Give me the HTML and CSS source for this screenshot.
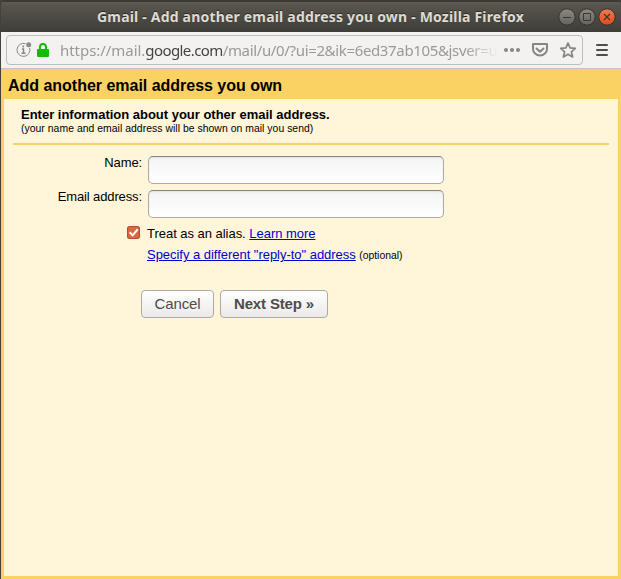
FILE: index.html
```
<!DOCTYPE html>
<html lang="en">
<head>
<meta charset="utf-8">
<title>Gmail - Add another email address you own</title>
<link rel="stylesheet" href="styles.css">
</head>
<body>
<div class="window">
  <header class="titlebar">
    <span class="title">Gmail - Add another email address you own - Mozilla Firefox</span>
    <svg class="controls" width="58" height="20" viewBox="0 0 58 20">
      <defs>
        <linearGradient id="gray" x2="0" y2="1"><stop stop-color="#8b8980"/><stop offset="1" stop-color="#65635c"/></linearGradient>
        <linearGradient id="orange" x2="0" y2="1"><stop stop-color="#f7794f"/><stop offset="1" stop-color="#dc4b1c"/></linearGradient>
      </defs>
      <g stroke="#33322e"><circle cx="9" cy="10" r="8.2" fill="url(#gray)"/><circle cx="29" cy="10" r="8.2" fill="url(#gray)"/><circle cx="49" cy="10" r="8.2" fill="url(#orange)"/></g>
      <g fill="none" stroke="#3b3934"><path d="M5 10.500h8M25.500 6.500h7v7h-7z"/><path d="M46 7l6 6M52 7l-6 6" stroke-width="1.200"/></g>
    </svg>
  </header>
  <div class="toolbar">
    <div class="urlbar">
      <svg class="info" width="16" height="16" viewBox="0 0 16 16"><path d="M9.500 1.700A6.500 6.500 0 1 0 13.700 6" fill="none" stroke="#8a8a8a"/><circle cx="12.700" cy="2.700" r="2.500" fill="#8a8a8a"/><path d="M6 7h1.500v4M5.500 11.200h4" fill="none" stroke="#858585" stroke-width="1.400"/><circle cx="7.200" cy="4.500" r="1" fill="#858585"/></svg>
      <svg class="lock" width="12" height="14" viewBox="0 0 12 14"><path d="M3 7V4a3 3 0 0 1 6 0v3" fill="none" stroke="#12bc00" stroke-width="2"/><rect y="6" width="12" height="8" rx="1" fill="#12bc00"/></svg>
      <div class="url"><span class="scheme">https://mail.</span><span class="host">google.com</span><span class="path">/mail/u/0/?ui=2&amp;ik=6ed37ab105&amp;jsver=u</span></div>
      <svg class="actions" width="76" height="18" viewBox="0 0 76 18"><g fill="#858585"><circle cx="3" cy="9" r="2"/><circle cx="9" cy="9" r="2"/><circle cx="15" cy="9" r="2"/></g><g fill="none" stroke="#858585" stroke-width="2" stroke-linejoin="round" stroke-linecap="round"><path d="M30 3h14v5a7 6.500 0 0 1-14 0z"/><path d="M33.500 7.500l3.500 3.300 3.500-3.300"/><path stroke-width="1.700" d="M65 2l2.100 4.800 5.200.5-3.900 3.500 1.200 5.200-4.600-2.700-4.600 2.700 1.200-5.200-3.900-3.500 5.200-.5z"/></g></svg>
    </div>
    <svg class="menu" width="12" height="12" viewBox="0 0 12 12"><path d="M1 1h10M1 6h10M1 11h10" stroke="#4d4d4d" stroke-width="2" stroke-linecap="round"/></svg>
  </div>
  <main class="page">
    <h1>Add another email address you own</h1>
    <div class="panel">
      <div class="intro">
        <h2>Enter information about your other email address.</h2>
        <p>(your name and email address will be shown on mail you send)</p>
      </div>
      <form class="form">
        <label for="name">Name:</label><input id="name" type="text">
        <label for="email">Email address:</label><input id="email" type="text">
        <svg class="check" width="13" height="13" viewBox="0 0 12 12"><rect x=".5" y=".5" width="11" height="11" rx="2" fill="#dd6840" stroke="#b74d2c"/><path d="M2.500 5.800l2.700 2.800 4.700-5.600" fill="none" stroke="#fff" stroke-width="1.800"/></svg>
        <div class="alias">Treat as an alias. <a href="#">Learn more</a></div>
        <div class="reply"><a href="#">Specify a different "reply-to" address</a> <small>(optional)</small></div>
      </form>
      <div class="buttons"><button class="cancel">Cancel</button><button class="next">Next Step »</button></div>
    </div>
  </main>
</div>
</body>
</html>
```
FILE: styles.css
```
* { box-sizing: border-box; }
body { margin: 0; font-family: "Liberation Sans", sans-serif; color: #000; background: #44403b; }
.window { width: 621px; height: 579px; display: flex; flex-direction: column; padding-left: 1px; }
.titlebar { height: 32px; display: flex; align-items: center; padding: 2px 5px 0 96px; background: linear-gradient(#3b3934 0 2px, #605d53 2px, #57554c 5px, #3e3d38 32px); border-radius: 5px 5px 0 0; }
.title { width: 430px; white-space: nowrap; font: bold 14px/20px "Noto Sans", sans-serif; letter-spacing: .19px; color: #dfdbd2; text-shadow: 0 -1px #2b2a27; }
.controls { margin-left: auto; }
.toolbar { height: 37px; display: flex; align-items: center; background: #f3f2f1; border-bottom: 1px solid #c5c4c5; padding: 0 13px 0 5px; }
.urlbar { width: 577px; height: 30px; display: flex; align-items: center; border: 1px solid #bfbebe; border-radius: 4px; background: #f3f2f1; padding-left: 9px; }
.info { flex: none; }
.lock { flex: none; margin: 0 0 1px 5px; }
.url { flex: none; width: 438px; height: 22px; margin-left: 11px; white-space: nowrap; font: 15px/22px "Noto Sans", sans-serif; color: #999; mask-image: linear-gradient(90deg, #000 405px, transparent); }
.scheme { letter-spacing: -.05px; }
.host { color: #444; letter-spacing: -.58px; }
.path { letter-spacing: -.35px; }
.actions { flex: none; margin-left: 5px; }
.menu { margin-left: auto; }
.page { flex: 1; background: #fad163; padding: 0 3px 3px; display: flex; flex-direction: column; }
h1 { margin: 0; height: 30px; padding-left: 4px; font-size: 16px; line-height: 33px; letter-spacing: -.02px; }
.panel { flex: 1; background: #fff5d8; padding: 0 9px; }
.intro { height: 46px; padding: 8px 8px 0; border-bottom: 2px solid #fad163; }
h2 { margin: 0; font-size: 13px; line-height: 15px; letter-spacing: -.01px; }
p { margin: 0; font-size: 10.4px; line-height: 13px; letter-spacing: .04px; }
.form { display: grid; grid-template-columns: 129px 296px; column-gap: 6px; grid-template-rows: 34px 34px 21px 21px; padding-top: 11px; font-size: 13px; }
label { text-align: right; line-height: 15px; white-space: nowrap; margin-top: -1px; letter-spacing: -.12px; }
input { width: 296px; height: 28px; border: 1px solid #aaa; border-top-color: #858585; border-radius: 5px; background: linear-gradient(#f4f4f4, #fff); box-shadow: inset 0 1px 2px #e2e2e2; }
.check { justify-self: end; margin: 2px 2px 0 0; }
.alias, .reply { line-height: 21px; margin: -1px 0 0 -1px; letter-spacing: -.03px; }
.reply { grid-column: 2; }
a { color: #0000cc; }
small { font-size: 10.4px; }
.buttons { display: flex; gap: 6px; margin: 24px 0 0 128px; }
button { height: 28px; padding: 0 0 2px; border: 1px solid #aaa; border-radius: 4px; background: linear-gradient(#fff, #eceae8); font: 15px "Liberation Sans", sans-serif; color: #4c4c4c; }
.cancel { width: 73px; letter-spacing: -.15px; }
.next { width: 108px; font-weight: bold; letter-spacing: -.15px; }
```
